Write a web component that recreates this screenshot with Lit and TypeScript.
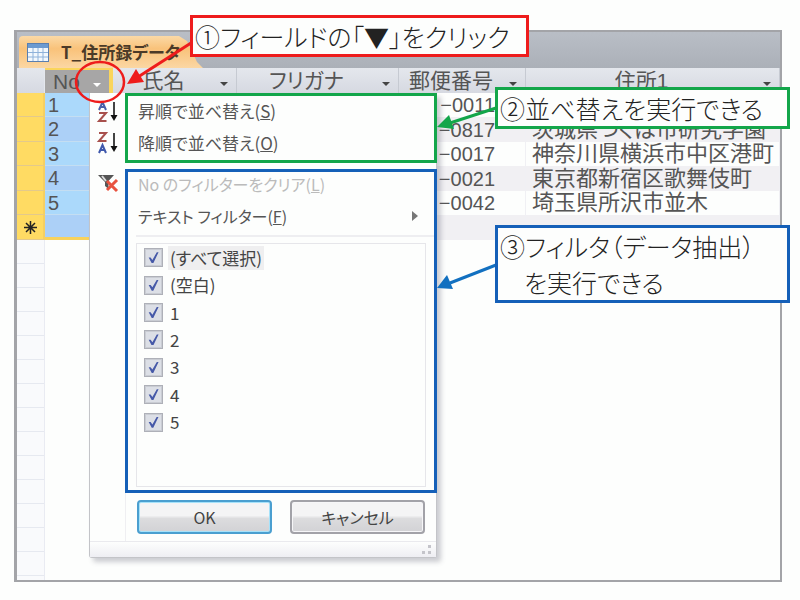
import { LitElement, html, svg, css } from "lit";
import { customElement } from "lit/decorators.js";
import { classMap } from "lit/directives/class-map.js";

interface Row {
  no: string;
  zip: string;
  address: string;
}

const rows: Row[] = [
  { no: "1", zip: "−0011", address: "" },
  { no: "2", zip: "−0817", address: "茨城県つくば市研究学園" },
  { no: "3", zip: "−0017", address: "神奈川県横浜市中区港町" },
  { no: "4", zip: "−0021", address: "東京都新宿区歌舞伎町" },
  { no: "5", zip: "−0042", address: "埼玉県所沢市並木" },
  { no: "", zip: "", address: "" },
];

const choices = ["(すべて選択)", "(空白)", "1", "2", "3", "4", "5"];

const dropArrow = html`<svg class="drop" viewBox="0 0 8 4" aria-hidden="true">
  <path d="M0 0H8L4 4Z" fill="currentColor" />
</svg>`;

const downArrow = svg`<path d="M18 1V15" stroke="#444" stroke-width="2" />
  <path d="M14.500 14H21.500L18 20Z" fill="#111" />`;

@customElement("filter-menu")
export class FilterMenu extends LitElement {
  static styles = css`
    :host {
      display: block;
      box-sizing: border-box;
      border: 1px solid #c3c4c8;
      border-top: 0;
      border-radius: 0 0 3px 3px;
      background: #fdfefd;
      box-shadow: 4px 4px 5px rgba(90, 90, 110, 0.3);
      color: #555;
      font: 17px/20px "Noto Sans CJK JP", sans-serif;
      font-feature-settings: "palt";
    }
    .group {
      display: grid;
      grid-template-columns: 35px 1fr;
    }
    .group + .group {
      margin-top: 6px;
    }
    .icons {
      display: flex;
      flex-direction: column;
      align-items: flex-end;
      padding: 8px 6px 0 0;
      gap: 9px;
    }
    .icons svg {
      width: 23px;
      height: 22px;
    }
    .icons.low {
      padding-top: 3px;
    }
    .frame {
      margin-right: -1px;
      padding: 0 8px;
    }
    .sort {
      border: 3px solid #13a64a;
    }
    .filter {
      border: 3px solid #1560b8;
      padding-bottom: 3px;
    }
    button {
      font: inherit;
      font-feature-settings: inherit;
      color: inherit;
    }
    .item {
      display: flex;
      align-items: center;
      justify-content: space-between;
      width: 100%;
      height: 32px;
      padding: 0 2px 2px;
      border: 0;
      background: none;
      text-align: left;
    }
    .filter .item {
      height: 38px;
      padding-bottom: 0;
      font-size: 16px;
    }
    .filter .item.off {
      height: 25px;
      padding-bottom: 2px;
      color: #bbb;
    }
    .more {
      width: 6px;
      height: 10px;
      margin-right: 6px;
    }
    .list {
      display: grid;
      grid-auto-rows: 1fr;
      box-sizing: border-box;
      height: 244px;
      margin: 6px 0 0;
      padding: 0 7px 50px;
      border: 1px solid #e6e6ea;
      color: #444;
    }
    .divider {
      height: 2px;
      margin: 0 -8px 0 0;
      border: 0;
      background: #eeeef1;
    }
    .choice {
      display: flex;
      align-items: center;
      gap: 5px;
    }
    .choice span {
      padding: 2px;
    }
    .choice .current {
      background: #efeff0;
    }
    .tick {
      appearance: none;
      box-sizing: border-box;
      width: 19px;
      height: 19px;
      margin: 0;
      padding: 3px;
      border: 1px solid #aeb0b8;
      background: #dcdfe6;
      box-shadow: inset 0 0 0 1px #c9ccd3;
    }
    .tick:checked::after {
      content: "";
      display: block;
      width: 11px;
      height: 11px;
      background: #4659a8;
      clip-path: polygon(6% 48%, 24% 48%, 40% 70%, 80% 0, 96% 0, 48% 100%, 34% 100%);
    }
    .actions {
      display: grid;
      grid-template-columns: 1fr 1fr;
      gap: 18px;
      margin-left: 35px;
      padding: 7px 11px;
      border-left: 1px solid #efeff2;
    }
    .action {
      height: 34px;
      padding: 0;
      border: 2px solid #a2a2a8;
      border-radius: 4px;
      background: linear-gradient(#f4f4f5 45%, #dcdcde 55%, #d2d2d5);
      box-shadow: inset 0 0 0 1px #f6f6f8;
      color: #444;
      font-size: 16px;
    }
    .action.primary {
      border-color: #4a9fd0;
      box-shadow: inset 0 0 0 1px #a6e2fa;
    }
    .foot {
      display: flex;
      align-items: center;
      justify-content: flex-end;
      height: 15px;
      padding-right: 4px;
      border-top: 1px solid #eaeaee;
      background: linear-gradient(#fdfefd, #eeeef3);
    }
    .grip {
      width: 11px;
      height: 10px;
    }
  `;

  render() {
    return html`
      <div class="group">
        <div class="icons" aria-hidden="true">
          <svg viewBox="0 0 23 22">
            <path d="M3 9L6.500 1L10 9M4 6H9" fill="none" stroke="#4a5fa8" stroke-width="2" />
            <path d="M3 12H10L3 20H10.500" fill="none" stroke="#a8514d" stroke-width="2" />
            ${downArrow}
          </svg>
          <svg viewBox="0 0 23 22">
            <path d="M3 1H10L3 9H10.500" fill="none" stroke="#a8514d" stroke-width="2" />
            <path d="M3 21L6.500 13L10 21M4 18H9" fill="none" stroke="#3f58ac" stroke-width="2" />
            ${downArrow}
          </svg>
        </div>
        <div class="frame sort">
          <button class="item"><span>昇順で並べ替え(<u>S</u>)</span></button>
          <button class="item"><span>降順で並べ替え(<u>O</u>)</span></button>
        </div>
      </div>
      <div class="group">
        <div class="icons low" aria-hidden="true">
          <svg viewBox="0 0 23 22">
            <path d="M2 3H18L12.500 9V17L9 14V10Z" fill="#555" />
            <path d="M6 4L10 9" stroke="#ddd" stroke-width="2" />
            <path d="M11 9L21 19M21 8L11 18" stroke="#e8523f" stroke-width="3" />
          </svg>
        </div>
        <div class="frame filter">
          <button class="item off" disabled><span>No のフィルターをクリア(<u>L</u>)</span></button>
          <button class="item">
            <span>テキスト フィルター(<u>F</u>)</span>
            <svg class="more" viewBox="0 0 6 10" aria-hidden="true">
              <path d="M0 0L6 5L0 10Z" fill="#777" />
            </svg>
          </button>
          <hr class="divider" />
          <div class="list">
            ${choices.map(
              (c, i) => html`<label class="choice">
                <input class="tick" type="checkbox" checked />
                <span class=${classMap({ current: i === 0 })}>${c}</span>
              </label>`
            )}
          </div>
        </div>
      </div>
      <div class="actions">
        <button class="action primary">OK</button>
        <button class="action">キャンセル</button>
      </div>
      <div class="foot">
        <svg class="grip" viewBox="0 0 11 10" aria-hidden="true">
          <path d="M7 0h3v3h-3zM7 6h3v3h-3zM1 6h3v3h-3z" fill="#c4c4ca" />
        </svg>
      </div>
    `;
  }
}

@customElement("app-root")
export class AppRoot extends LitElement {
  static styles = css`
    :host {
      display: flex;
      position: relative;
      box-sizing: border-box;
      min-height: 100vh;
      padding: 30px 18px 18px 14px;
      background: #fdfefd;
      color: #555;
      font: 20px/24px "Liberation Sans", "Noto Sans CJK JP", sans-serif;
    }
    .window {
      display: flex;
      flex-direction: column;
      flex: 1;
      border: 2px solid #a3a4a8;
      border-left-width: 3px;
    }
    .tabs {
      display: flex;
      align-items: flex-end;
      height: 36px;
      background: linear-gradient(#b9bec6, #abb0b8);
    }
    .tab {
      display: flex;
      align-items: center;
      gap: 12px;
      box-sizing: border-box;
      width: 184px;
      height: 32px;
      margin-left: 2px;
      padding: 0 8px;
      border-radius: 4px 0 0 0;
      background: linear-gradient(#fbd9a6, #f9c27a 40%, #fbd7a4);
      clip-path: polygon(0 0, 160px 0, 168px 5px, 178px 26px, 184px 32px, 0 32px);
      color: #4b3a28;
      font: bold 17px/20px "Noto Sans CJK JP", sans-serif;
      font-feature-settings: "palt";
      white-space: nowrap;
    }
    .tab svg {
      flex: none;
      width: 22px;
      height: 19px;
    }
    table {
      width: 100%;
      table-layout: fixed;
      border-spacing: 0;
    }
    .c-sel {
      width: 28px;
    }
    .c-no {
      width: 68px;
    }
    .c-name {
      width: 124px;
    }
    .c-kana {
      width: 162px;
    }
    .c-zip {
      width: 127px;
    }
    th,
    td {
      box-sizing: border-box;
      padding: 0;
      white-space: nowrap;
    }
    th {
      height: 25px;
      border-right: 1px solid #c6cad2;
      background: linear-gradient(#e4e7ed, #d6d9e1);
      font-weight: 400;
      font-size: 21px;
      line-height: 22px;
      font-feature-settings: "palt";
    }
    th.corner {
      border-right-color: #e4e7ed;
    }
    th.active {
      border-top: 2px solid #fad55c;
      border-right: 4px solid #fad55c;
      background: #a7a6a6;
    }
    th.active .head {
      padding-left: 8px;
    }
    th.active .label {
      text-align: left;
    }
    .head {
      display: flex;
      align-items: center;
      padding-right: 8px;
      gap: 6px;
    }
    .label {
      flex: 1;
      text-align: center;
    }
    .drop {
      width: 8px;
      height: 4px;
      margin-top: 6px;
      color: #444;
    }
    .active .drop {
      color: #fff;
    }
    td {
      height: 24px;
      line-height: 22px;
    }
    tr:nth-child(even) td {
      height: 25px;
      background: #f1f0f3;
    }
    td + td {
      border-right: 1px solid #f0f0f4;
    }
    tr td.mark {
      border-right: 2px solid #f5cf62;
      border-bottom: 1px solid #e3c98c;
      background: #ffdb63;
      color: #222;
      text-align: center;
    }
    .mark svg {
      width: 13px;
      height: 13px;
    }
    tr td.no {
      padding-left: 3px;
      border-bottom: 1px solid #c4def2;
      background: #abd9fb;
    }
    tr:nth-child(even) td.no {
      background: #acd0f7;
    }
    tr:last-child td.no {
      border-bottom: 3px solid #f8d25c;
    }
    .zip {
      padding-right: 30px;
      text-align: right;
    }
    .address {
      padding-left: 6px;
      font-size: 22px;
      font-feature-settings: "palt";
    }
    .rest {
      flex: 1;
      display: flex;
    }
    .margin {
      width: 27px;
      border-right: 1px solid #e9ebf2;
      background: repeating-linear-gradient(#f9fafc 0 23px, #e6e9f0 23px 24px);
    }
    .menu {
      position: absolute;
      top: 93px;
      left: 89px;
      width: 348px;
    }
    .lines {
      position: absolute;
      inset: 0 auto auto 0;
      width: 800px;
      height: 600px;
      pointer-events: none;
    }
    .note {
      position: absolute;
      box-sizing: border-box;
      padding: 0 2px;
      border: 3px solid;
      background: #fdfefd;
      font: 300 25px/36px "Noto Sans CJK JP", sans-serif;
      font-feature-settings: "palt";
      white-space: nowrap;
    }
    .note p {
      margin: 0;
      color: #222;
    }
    .note .next {
      padding-left: 24px;
    }
    .click {
      top: 15px;
      left: 190px;
      width: 339px;
      border-color: #ee1c1c;
    }
    .order {
      top: 87px;
      left: 495px;
      width: 295px;
      border-color: #13a64a;
    }
    .extract {
      top: 225px;
      left: 495px;
      width: 295px;
      border-color: #1560b8;
    }
  `;

  private head(name: string, cls = "") {
    return html`<th class=${cls} scope="col">
      <div class="head"><span class="label">${name}</span>${dropArrow}</div>
    </th>`;
  }

  render() {
    return html`
      <main class="window">
        <div class="tabs">
          <div class="tab">
            <svg viewBox="0 0 22 19" aria-hidden="true">
              <rect x="0.500" y="0.500" width="21" height="18" fill="#f3f8fd" stroke="#5a7fb0" />
              <rect x="1" y="1" width="20" height="4" fill="#6c9ad0" />
              <path d="M1 9.500H21M1 14H21M6 5V18M11 5V18M16 5V18" stroke="#8fb2da" />
            </svg>
            <span>T_住所録データ</span>
          </div>
        </div>
        <table>
          <colgroup>
            <col class="c-sel" /><col class="c-no" /><col class="c-name" />
            <col class="c-kana" /><col class="c-zip" /><col />
          </colgroup>
          <thead>
            <tr>
              <th class="corner"></th>
              ${this.head("No", "active")} ${this.head("氏名")} ${this.head("フリガナ")}
              ${this.head("郵便番号")} ${this.head("住所1")}
            </tr>
          </thead>
          <tbody>
            ${rows.map(
              (r) => html`<tr>
                <td class="mark">
                  ${r.no
                    ? ""
                    : html`<svg viewBox="0 0 13 13" aria-hidden="true">
                        <path
                          d="M6.500 0V13M0 6.500H13M2 2L11 11M11 2L2 11"
                          stroke="#222"
                          stroke-width="1.500"
                        />
                      </svg>`}
                </td>
                <td class="no">${r.no}</td>
                <td></td>
                <td></td>
                <td class="zip">${r.zip}</td>
                <td class="address">${r.address}</td>
              </tr>`
            )}
          </tbody>
        </table>
        <div class="rest"><div class="margin"></div></div>
      </main>
      <filter-menu class="menu"></filter-menu>
      <svg class="lines" viewBox="0 0 800 600" aria-hidden="true">
        <ellipse cx="100" cy="82" rx="24" ry="20" fill="none" stroke="#ee1c1c" stroke-width="2.500" />
        <path d="M191 43L138 77" stroke="#ee1c1c" stroke-width="3" />
        <path d="M127 84L136 69L144 82Z" fill="#ee1c1c" />
        <path d="M496 108L450 123" stroke="#13a64a" stroke-width="3" />
        <path d="M437 127L449 115L454 129Z" fill="#13a64a" />
        <path d="M496 265L450 283" stroke="#1270c0" stroke-width="3" />
        <path d="M437 288L447 275L453 289Z" fill="#1270c0" />
      </svg>
      <aside class="note click"><p>①フィールドの「▼」をクリック</p></aside>
      <aside class="note order"><p>②並べ替えを実行できる</p></aside>
      <aside class="note extract">
        <p>③フィルタ（データ抽出）</p>
        <p class="next">を実行できる</p>
      </aside>
    `;
  }
}
